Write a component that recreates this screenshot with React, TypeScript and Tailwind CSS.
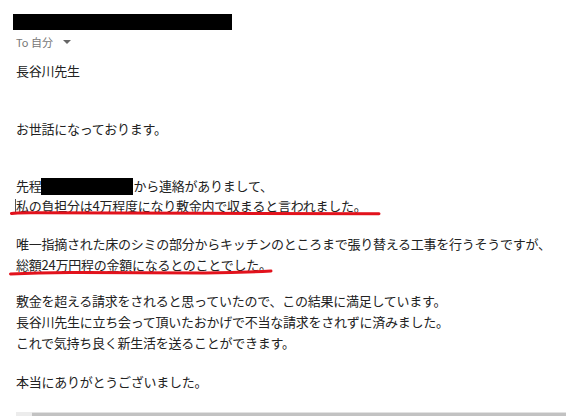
import React from "react";

const font = { fontFamily: '"Noto Sans CJK JP", "Noto Sans", sans-serif' };

export default function App() {
  return (
    <div
      className="relative w-[566px] h-[416px] overflow-hidden bg-white text-[#222222] text-[13px] tracking-[-0.25px]"
      style={font}
    >
      <div className="flex flex-col">
        <div className="mt-[14px] ml-[13px] w-[219px] h-[16px] bg-black" />
        <div className="mt-[5px] ml-[16px] h-[14px] flex items-center gap-[4px] text-[11px] leading-[14px] text-[#777777] tracking-normal">
          <span>To 自分</span>
          <span className="ml-[6px] w-0 h-0 border-l-[4px] border-r-[4px] border-t-[4px] border-l-transparent border-r-transparent border-t-[#666666]" />
        </div>
        <div className="mt-[12px] pl-[16px] h-[20px] leading-[20px]">長谷川先生</div>
        <div className="mt-[38px] pl-[16px] h-[20px] leading-[20px]">お世話になっております。</div>
        <div className="mt-[37px] pl-[16px] h-[20px] leading-[20px] flex items-center">
          <span>先程</span>
          <span className="ml-[-1px] w-[92px] h-[17px] bg-black" />
          <span className="ml-[1px]">から連絡がありまして、</span>
        </div>
        <div className="pl-[15px] h-[20px] leading-[20px] flex items-center">
          <span className="w-px h-[15px] bg-[#555555]" />
          <span>私の負担分は4万程度になり敷金内で収まると言われました。</span>
        </div>
        <div className="mt-[18px] pl-[16px] h-[20px] leading-[20px]">
          唯一指摘された床のシミの部分からキッチンのところまで張り替える工事を行うそうですが、
        </div>
        <div className="mt-px pl-[16px] h-[20px] leading-[20px]">総額24万円程の金額になるとのことでした。</div>
        <div className="mt-[16px] pl-[16px] h-[20px] leading-[20px]">
          敷金を超える請求をされると思っていたので、この結果に満足しています。
        </div>
        <div className="mt-px pl-[16px] h-[20px] leading-[20px]">
          長谷川先生に立ち会って頂いたおかげで不当な請求をされずに済みました。
        </div>
        <div className="mt-px pl-[16px] h-[20px] leading-[20px]">これで気持ち良く新生活を送ることができます。</div>
        <div className="mt-[19px] pl-[16px] h-[20px] leading-[20px]">本当にありがとうございました。</div>
        <div className="mt-[20px] ml-[16px] flex h-[4px]">
          <div className="w-[16px] h-full bg-[#ececec]" />
          <div className="flex-1 flex flex-col">
            <div className="h-px bg-[#e2e2e2]" />
            <div className="flex-1 bg-[#c2c2c2]" />
          </div>
        </div>
      </div>
      <svg
        className="absolute left-0 top-0 pointer-events-none"
        width="566"
        height="416"
        viewBox="0 0 566 416"
      >
        <path
          d="M11.5 213.5 Q 14 212.6 40 212.8 L 200 213.2 L 379 213.8"
          fill="none"
          stroke="#e2121c"
          strokeWidth="3"
          strokeLinecap="round"
        />
        <path
          d="M10.5 274 Q 40 272.2 78 272.4 L 205 273 Q 240 272.6 271 271"
          fill="none"
          stroke="#e2121c"
          strokeWidth="3"
          strokeLinecap="round"
        />
      </svg>
    </div>
  );
}
